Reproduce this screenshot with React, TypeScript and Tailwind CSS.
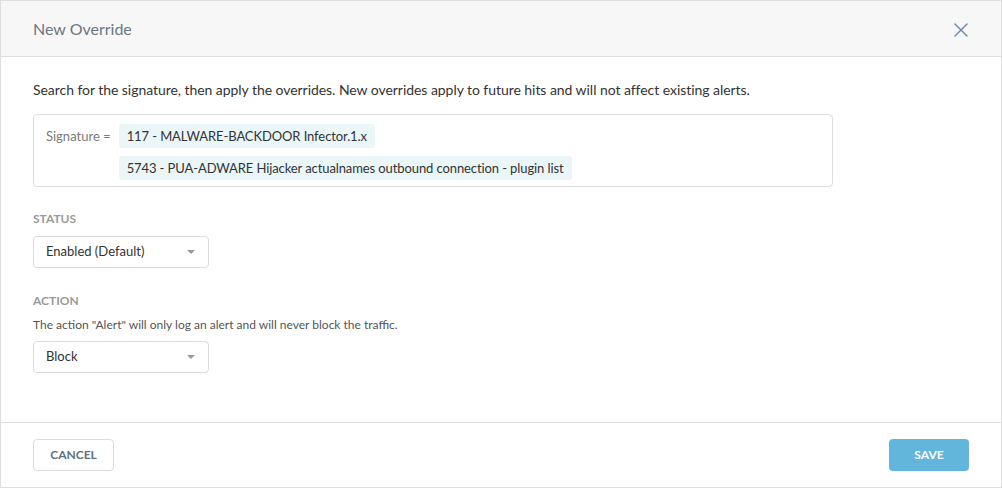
import { X } from 'lucide-react';

function Select({ value }: { value: string }) {
  return (
    <div className="flex h-8 w-[176px] items-center justify-between rounded border border-[#dcdcdc] bg-white pl-3 pr-[12px]">
      <span className="text-[13px] text-[#333]">{value}</span>
      <span className="mr-[1px] h-0 w-0 border-x-[4px] border-t-[4px] border-x-transparent border-t-[#999]" />
    </div>
  );
}

export default function App() {
  return (
    <div
      className="flex h-[488px] w-[1002px] flex-col border border-[#dedede] bg-white"
      style={{ fontFamily: 'Lato, "Open Sans", sans-serif' }}
    >
      {/* Header */}
      <div className="flex h-[56px] shrink-0 items-center justify-between border-b border-[#dedede] bg-[#f7f7f7] pl-8 pr-[28px]">
        <h1 className="text-[16px] text-[#6b7683]">New Override</h1>
        <X className="mt-[2px] h-6 w-6 text-[#6a8aa8]" strokeWidth={1.4} />
      </div>

      {/* Body */}
      <div className="flex flex-1 flex-col px-8 pt-[23px]">
        <p className="text-[14px] leading-[20px] tracking-[-0.05px] text-[#333]">
          Search for the signature, then apply the overrides. New overrides apply to future hits and will not affect
          existing alerts.
        </p>

        <div className="mt-[14px] flex w-[800px] items-start gap-2 rounded border border-[#dedede] px-3 pb-[6px] pt-[9px]">
          <span className="mt-[3px] text-[13px] leading-[18px] text-[#7a7a7a]">Signature =</span>
          <div className="flex flex-col items-start gap-2">
            <span className="rounded-sm bg-[#eaf6f8] px-[8px] py-[2px] text-[13px] leading-[20px] tracking-[-0.1px] text-[#333]">
              117 - MALWARE-BACKDOOR Infector.1.x
            </span>
            <span className="rounded-sm bg-[#eaf6f8] px-[8px] py-[2px] text-[13px] leading-[20px] tracking-[-0.1px] text-[#333]">
              5743 - PUA-ADWARE Hijacker actualnames outbound connection - plugin list
            </span>
          </div>
        </div>

        <div className="mt-[24px] text-[12px] font-bold leading-[16px] text-[#9a9a9a]">STATUS</div>
        <div className="mt-[9px]">
          <Select value="Enabled (Default)" />
        </div>

        <div className="mt-[25px] text-[12px] font-bold leading-[16px] text-[#9a9a9a]">ACTION</div>
        <p className="mt-[8px] text-[12px] leading-[16px] text-[#555]">
          The action "Alert" will only log an alert and will never block the traffic.
        </p>
        <div className="mt-[8px]">
          <Select value="Block" />
        </div>
      </div>

      {/* Footer */}
      <div className="flex h-[65px] shrink-0 items-center justify-between border-t border-[#dedede] pl-8 pr-[32px]">
        <button className="h-8 w-[81px] rounded border border-[#dcdcdc] bg-white text-[12px] font-bold text-[#5f7183]">
          CANCEL
        </button>
        <button className="h-8 w-[80px] rounded bg-[#63b6db] text-[12px] font-bold text-white">SAVE</button>
      </div>
    </div>
  );
}
